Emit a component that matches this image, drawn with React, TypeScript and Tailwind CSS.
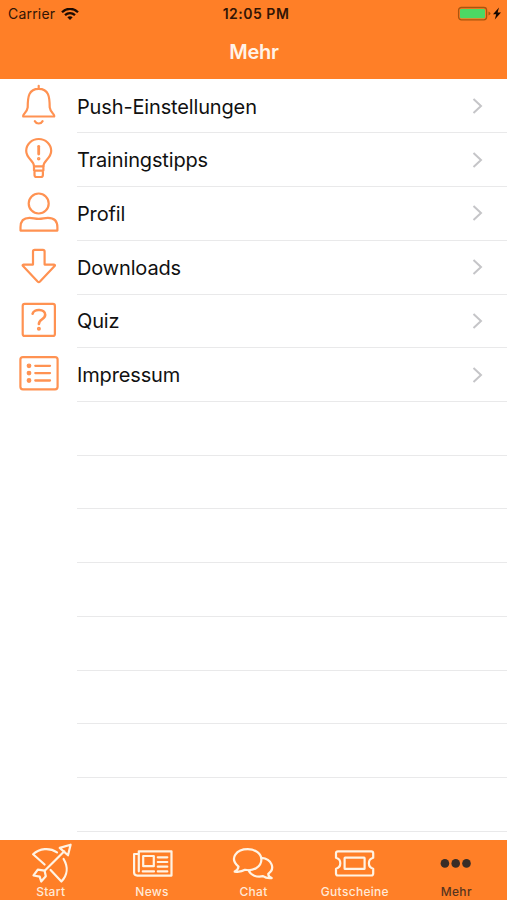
import type { ReactNode } from 'react';

type Item = { label: string; icon: ReactNode };

const items: Item[] = [
  {
    label: 'Push-Einstellungen',
    icon: (
      <>
        <path d="M38.7 6.500v3M23.200 37.200c-1-1.700 4-4.500 4.500-9.200 0-10.500 1-18.500 11-18.500s11 8 11 18.500c.5 4.700 5.500 7.500 4.500 9.200Z" />
        <path d="M34.800 41.800c1.800 3.200 6 3.200 7.800 0" />
      </>
    ),
  },
  {
    label: 'Trainingstipps',
    icon: (
      <>
        <path d="M34 34c0-6-7.800-7.500-7.800-15.500a12.500 11.800 0 0 1 25 0c0 8-7.800 9.500-7.800 15.500Z" />
        <path d="M34 34v4.300h9.400V34M34.500 38.500v4.200q0 2 2 2h4.400q2 0 2-2v-4.200" />
        <path d="M38.700 14v7.800" strokeWidth="2.800" />
        <circle cx="38.700" cy="26.500" r="1" strokeWidth="1.500" />
      </>
    ),
  },
  {
    label: 'Profil',
    icon: (
      <>
        <circle cx="38.700" cy="17.200" r="10" />
        <path d="M20.500 44.300V41c0-6.200 3-9.400 9-9.400 4 0 5 1 9.200 1s5.200-1 9.200-1c6 0 9.500 3.200 9.500 9.400v3.300Z" />
      </>
    ),
  },
  {
    label: 'Downloads',
    icon: <path d="M33 24.300V11.300q0-1.700 1.700-1.700h8.200q1.700 0 1.700 1.700v13H54q1.600.2.600 1.500L40 41.200q-1.200 1.200-2.400 0L23 25.800q-1-1.300.600-1.500Z" />,
  },
  {
    label: 'Quiz',
    icon: (
      <>
        <rect x="22.700" y="9.600" width="32.200" height="32" rx="2" />
        <path d="M32.600 19.500c1-5.500 12.800-5 12.600 1 0 4.700-6.300 4.300-6.300 9.200" strokeWidth="2.600" />
        <circle cx="38.900" cy="34.500" r="1.100" strokeWidth="1.800" />
      </>
    ),
  },
  {
    label: 'Impressum',
    icon: (
      <>
        <rect x="20.400" y="9.800" width="37.200" height="32.200" rx="2.500" />
        <g fill="#ff9252" strokeWidth="1.200">
          <circle cx="29" cy="18.500" r="1.800" />
          <circle cx="29" cy="25.800" r="1.800" />
          <circle cx="29" cy="33.200" r="1.800" />
        </g>
        <path d="M35.300 18.500H50M35.300 25.800H50M35.300 33.200H50" strokeWidth="2.300" />
      </>
    ),
  },
];

const tabs: Item[] = [
  {
    label: 'Start',
    icon: (
      <>
        <path d="M43.300 11.300 23.700 30.700M38.700 7.900 49.600 4.700 47 15.300Z" />
        <path d="m12.500 35.500 4.300-5.800 6.800 1 1.200 5.600-4.600 5.200-1.500-4.800Z" />
        <path d="M36 12.300c-7.500-5-17.500-4-23.900 2l11.500 10.200M42.600 19c4.500 7.500 4.100 16-2.200 22.500L29.600 30" />
      </>
    ),
  },
  {
    label: 'News',
    icon: (
      <>
        <path d="M16.800 11.300h32.700v24.300H15.300q-3.200 0-3.200-3V14h4.700M16.800 11.300v20" />
        <rect x="21.200" y="16" width="10.600" height="10.200" />
        <path d="M35.800 17.300h9.500M35.800 22h9.500M35.800 26.700h9.500M35.800 31.400h9.500M20.800 31.400H32" />
      </>
    ),
  },
  {
    label: 'Chat',
    icon: (
      <>
        <path d="M15.500 26.700C5.500 18 14 9.200 24.800 9.200c7.700 0 13.600 4.600 13.600 10.400 0 7.800-8.800 12-16.400 10.200-3 1.900-6.500 2.300-10.300 1.800 2.500-1.200 3.600-2.600 3.800-4.900Z" />
        <path d="M38.400 17.800c10.600 1 14.200 11 6.800 16 .2 2 1.300 3.300 3.500 4.300-3.700.4-6.400-.2-8.700-1.900-6.300 1.300-12.300-.8-14.300-5.800" />
      </>
    ),
  },
  {
    label: 'Gutscheine',
    icon: (
      <>
        <path d="M13 11.300h33.200q2 0 2 2v4.500q-4.300 1.200-4.300 5.500t4.300 5.500v4.700q0 2-2 2H13q-2 0-2-2v-4.700q4.300-1.200 4.300-5.500T11 17.800v-4.500q0-2 2-2Z" />
        <rect x="19.600" y="17.700" width="20" height="11.200" rx=".5" />
      </>
    ),
  },
  {
    label: 'Mehr',
    icon: (
      <g fill="#382d27" stroke="none">
        <circle cx="18.900" cy="23.400" r="4.300" />
        <circle cx="29.700" cy="23.400" r="4.300" />
        <circle cx="40.500" cy="23.400" r="4.300" />
      </g>
    ),
  },
];

function StatusBar() {
  return (
    <div className="grid h-7 grid-cols-3 items-center text-[14px] leading-7 text-[#321505]">
      <div className="flex items-center gap-[6px] pl-[8px]">
        <span className="tracking-[0.2px]">Carrier</span>
        <svg className="h-3 w-[18px]" viewBox="0 0 18 12" fill="none" stroke="#1d0b02" strokeWidth="2.300">
          <path d="M1 4.200C5.600-.3 12.400-.3 17 4.200M4 7.200c2.900-2.600 7.100-2.600 10 0" />
          <path d="m9 12-2.700-2.700q2.700-2 5.400 0Z" fill="#1d0b02" stroke="none" />
        </svg>
      </div>
      <span className="pl-[5px] text-center font-semibold tracking-[0.500px] whitespace-nowrap">12:05 PM</span>
      <div className="flex items-center justify-end pr-[5px]">
        <svg className="h-[16px] w-[45px]" viewBox="0 0 45 16">
          <rect x="1.600" y="1.500" width="28" height="12.300" rx="2.800" fill="#ff7f27" stroke="#a8560f" strokeWidth="1.300" />
          <rect x="3" y="3" width="25" height="9.300" rx="1.200" fill="#4cd964" />
          <path d="M31.500 5.500v4q2-1 2-2t-2-2Z" fill="#a8560f" />
          <path d="m42 1.500-6 6.700h3.200L37.800 13.500l6.200-7h-3.400Z" fill="#160700" />
        </svg>
      </div>
    </div>
  );
}

export default function App() {
  return (
    <div className="flex h-[900px] w-[507px] flex-col overflow-hidden bg-white font-['Inter','Liberation_Sans',sans-serif]">
      <header className="h-[79px] shrink-0 bg-[#ff7f27]">
        <StatusBar />
        <h1 className="pl-[1px] text-center text-[20px] leading-[49px] font-semibold tracking-[-0.2px] text-[#fff3e8]">Mehr</h1>
      </header>

      <main className="min-h-0 flex-1 overflow-hidden pt-[0.7px]">
        {Array.from({ length: 14 }, (_, i) => {
          const item = items[i];
          return (
            <div key={i} className="flex h-[53.73px]">
              <div className="w-[77px] shrink-0">
                {item && (
                  <svg className="h-[53.73px] w-[77px]" viewBox="0 0.7 77 53.73" fill="none" stroke="#ff9252" strokeWidth="2.200" strokeLinecap="round" strokeLinejoin="round">
                    {item.icon}
                  </svg>
                )}
              </div>
              <div className="flex flex-1 items-center justify-between border-b border-[#e9e9ea] pr-[24px]">
                {item && (
                  <>
                    <span className="pt-px text-[20px] tracking-[-0.15px] text-[#111]">{item.label}</span>
                    <svg className="h-4 w-[11px]" viewBox="0 0 11 16" fill="none" stroke="#c5c5c8" strokeWidth="2">
                      <path d="m1.500 1 7.500 7-7.500 7" />
                    </svg>
                  </>
                )}
              </div>
            </div>
          );
        })}
      </main>

      <nav className="grid h-[60px] shrink-0 grid-cols-5 bg-[#ff7f27]">
        {tabs.map((tab, i) => (
          <div key={tab.label} className={`flex flex-col items-center ${i === 4 ? 'text-[#57351f]' : 'text-[#ffe9d6]'}`}>
            <svg className="h-[44px] w-[60px] shrink-0" viewBox="0 0 60 44" fill="none" stroke="#fff3e4" strokeWidth="2.200" strokeLinecap="round" strokeLinejoin="round">
              {tab.icon}
            </svg>
            <span className="text-[12px] leading-[15px] font-medium tracking-[0.3px]">{tab.label}</span>
          </div>
        ))}
      </nav>
    </div>
  );
}
